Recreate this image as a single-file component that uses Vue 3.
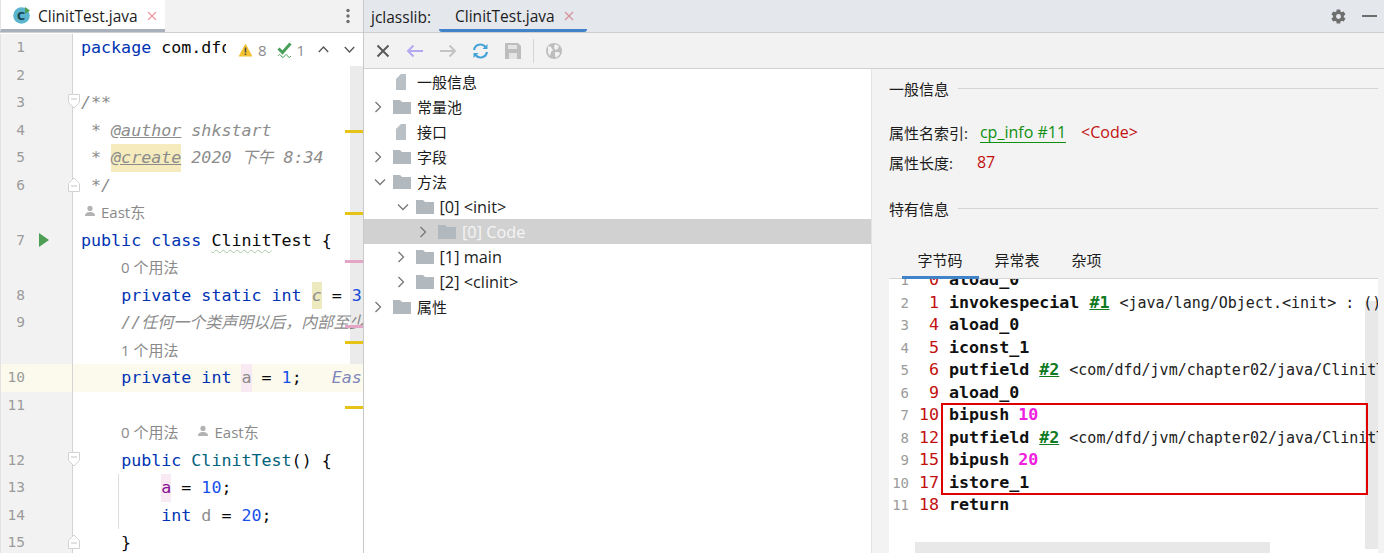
<script setup>
const editorRows = [
  { no: 1, tokens: [['kw', 'package'], ['', ' com.dfd.jvm;']] },
  { no: 2, tokens: [] },
  { no: 3, fold: 'open', tokens: [['cm', '/**']] },
  { no: 4, tokens: [['cm', ' * '], ['tag', '@author'], ['cm', ' shkstart']] },
  { no: 5, tokens: [['cm', ' * '], ['tag hl', '@create'], ['cm', ' 2020 '], ['cm cjk', '下午'], ['cm', ' 8:34']] },
  { no: 6, fold: 'close', tokens: [['cm', ' */']] },
  { hint: 'East东', person: true, left: 3 },
  { no: 7, run: true, tokens: [['kw', 'public'], ['', ' '], ['kw', 'class'], ['', ' '], ['wavy', 'Clinit'], ['', 'Test {']] },
  { hint: '0 个用法', left: 48 },
  { no: 8, tokens: [['', '    '], ['kw', 'private'], ['', ' '], ['kw', 'static'], ['', ' '], ['kw', 'int'], ['', ' '], ['stat', 'c'], ['', ' = '], ['num', '3'], ['', ';']] },
  { no: 9, tokens: [['', '    '], ['cm', '//'], ['cm cjk', '任何一个类声明以后，内部至少存在一个类的构造器']] },
  { hint: '1 个用法', left: 48 },
  { no: 10, current: true, tokens: [['', '    '], ['kw', 'private'], ['', ' '], ['kw', 'int'], ['', ' '], ['unused', 'a'], ['', ' = '], ['num', '1'], ['', ';'], ['inlay', '   East东']] },
  { no: 11, tokens: [] },
  { hint: '0 个用法', left: 48, author: 'East东' },
  { no: 12, fold: 'open', tokens: [['', '    '], ['kw', 'public'], ['', ' '], ['ctor', 'ClinitTest'], ['', '() {']] },
  { no: 13, guide: true, tokens: [['', '        '], ['field', 'a'], ['', ' = '], ['num', '10'], ['', ';']] },
  { no: 14, guide: true, tokens: [['', '        '], ['kw', 'int'], ['', ' '], ['gray', 'd'], ['', ' = '], ['num', '20'], ['', ';']] },
  { no: 15, fold: 'close', tokens: [['', '    }']] }
]

const marks = [
  { top: 130, color: '#e6c417' },
  { top: 212, color: '#e6c417' },
  { top: 260, color: '#e3a6c4' },
  { top: 325, color: '#e3a6c4' },
  { top: 341, color: '#e6c417' },
  { top: 406, color: '#e6c417' }
]

const treeRows = [
  { label: '一般信息', level: 0, icon: 'doc' },
  { label: '常量池', level: 0, arrow: 'right' },
  { label: '接口', level: 0, icon: 'doc' },
  { label: '字段', level: 0, arrow: 'right' },
  { label: '方法', level: 0, arrow: 'down' },
  { label: '[0] <init>', level: 1, arrow: 'down', latin: true },
  { label: '[0] Code', level: 2, arrow: 'right', selected: true, latin: true },
  { label: '[1] main', level: 1, arrow: 'right', latin: true },
  { label: '[2] <clinit>', level: 1, arrow: 'right', latin: true },
  { label: '属性', level: 0, arrow: 'right' }
]

const byteRows = [
  { no: 1, off: 0, op: 'aload_0' },
  { no: 2, off: 1, op: 'invokespecial', ref: '#1', rest: '<java/lang/Object.<init> : ()V>' },
  { no: 3, off: 4, op: 'aload_0' },
  { no: 4, off: 5, op: 'iconst_1' },
  { no: 5, off: 6, op: 'putfield', ref: '#2', rest: '<com/dfd/jvm/chapter02/java/ClinitTest.a : I>' },
  { no: 6, off: 9, op: 'aload_0' },
  { no: 7, off: 10, op: 'bipush', val: '10' },
  { no: 8, off: 12, op: 'putfield', ref: '#2', rest: '<com/dfd/jvm/chapter02/java/ClinitTest.a : I>' },
  { no: 9, off: 15, op: 'bipush', val: '20' },
  { no: 10, off: 17, op: 'istore_1' },
  { no: 11, off: 18, op: 'return' }
]
</script>

<template>
  <div class="app">
    <section class="left">
      <header class="left-tabs">
        <div class="file-tab">
          <svg class="class-icon" width="18" height="18" viewBox="0 0 18 18">
            <circle cx="8.5" cy="9.5" r="8.3" fill="#5cb5cf" />
            <text x="8" y="13.5" text-anchor="middle" class="class-c">C</text>
            <path d="M12 1v7l5-3.5z" fill="#4f9e55" />
          </svg>
          <span class="tab-name">ClinitTest.java</span>
          <svg class="tab-close" width="10" height="10" viewBox="0 0 10 10"><path d="M1 1l8 8M9 1l-8 8" stroke="#ee9aa8" stroke-width="1.2" fill="none" /></svg>
        </div>
        <svg class="kebab" width="6" height="16" viewBox="0 0 6 16"><circle cx="3" cy="2.5" r="1.7" fill="#6e6e6e" /><circle cx="3" cy="8" r="1.7" fill="#6e6e6e" /><circle cx="3" cy="13.5" r="1.7" fill="#6e6e6e" /></svg>
      </header>

      <div class="editor">
        <template v-for="(row, i) in editorRows" :key="i">
          <div v-if="row.hint" class="row">
            <div class="gutter"></div>
            <div class="hint" :style="{ paddingLeft: row.left + 'px' }">
              <svg v-if="row.person" class="person" width="12" height="12" viewBox="0 0 12 12"><circle cx="6" cy="3.4" r="2.6" fill="#b3b3b3" /><path d="M1 11c0-3 2-4 5-4s5 1 5 4z" fill="#b3b3b3" /></svg>
              <span>{{ row.hint }}</span>
              <template v-if="row.author">
                <svg class="person after" width="12" height="12" viewBox="0 0 12 12"><circle cx="6" cy="3.4" r="2.6" fill="#b3b3b3" /><path d="M1 11c0-3 2-4 5-4s5 1 5 4z" fill="#b3b3b3" /></svg>
                <span>{{ row.author }}</span>
              </template>
            </div>
          </div>
          <div v-else class="row" :class="{ current: row.current }">
            <div class="gutter">
              <span class="line-no">{{ row.no }}</span>
              <svg v-if="row.run" class="run" width="10" height="14" viewBox="0 0 10 14"><path d="M0 0l10 7-10 7z" fill="#4f9e55" /></svg>
              <svg v-if="row.fold === 'open'" class="fold" width="12" height="15" viewBox="0 0 12 15"><path d="M.5.5h11v8l-5.5 5.5-5.5-5.5z" fill="#fff" stroke="#d2d2d2" /><path d="M3 5h6" stroke="#c4c4c4" /></svg>
              <svg v-if="row.fold === 'close'" class="fold" width="12" height="15" viewBox="0 0 12 15"><path d="M.5 14.5h11v-8l-5.5-5.5-5.5 5.5z" fill="#fff" stroke="#d2d2d2" /><path d="M3 9h6" stroke="#c4c4c4" /></svg>
            </div>
            <div class="code">
              <span v-for="(t, j) in row.tokens" :key="j" :class="t[0]">{{ t[1] }}</span>
              <i v-if="row.guide" class="guide"></i>
            </div>
          </div>
        </template>

        <div class="scroll-track"></div>
        <i v-for="m in marks" :key="m.top" class="mark" :style="{ top: m.top - 33 + 'px', background: m.color }"></i>

        <div class="inspect">
          <svg width="15" height="14" viewBox="0 0 15 14"><path d="M7.5.5l7 13H.5z" fill="#f2c230" /><path d="M7.5 4.5v5M7.5 10.5v1.5" stroke="#4a4a4a" stroke-width="1.5" /></svg>
          <span class="count">8</span>
          <svg class="check" width="15" height="16" viewBox="0 0 15 16"><path d="M1.5 6.5l4 4 8-9" stroke="#49a05a" stroke-width="3" fill="none" /><path d="M1 14c1.5-2 2-2 3.3 0s1.8 2 3.2 0 2-2 3.2 0 1.8 2 3.3 0" stroke="#49a05a" fill="none" /></svg>
          <span class="count">1</span>
          <svg class="chev first" width="11" height="7" viewBox="0 0 11 7"><path d="M.8 6l4.7-5 4.7 5" stroke="#555" stroke-width="1.3" fill="none" /></svg>
          <svg class="chev" width="11" height="7" viewBox="0 0 11 7"><path d="M.8 1l4.7 5 4.7-5" stroke="#555" stroke-width="1.3" fill="none" /></svg>
        </div>
      </div>
    </section>

    <section class="right">
      <header class="right-tabs">
        <span class="jc-label">jclasslib:</span>
        <div class="jc-tab">
          <span class="tab-name">ClinitTest.java</span>
          <svg class="tab-close" width="10" height="10" viewBox="0 0 10 10"><path d="M1 1l8 8M9 1l-8 8" stroke="#d98f9c" stroke-width="1.2" fill="none" /></svg>
        </div>
        <div class="spacer"></div>
        <svg class="gear" width="17" height="17" viewBox="0 0 24 24"><path fill="#6e6e6e" d="M19.4 13c.1-.3.1-.7.1-1s0-.7-.1-1l2.1-1.6c.2-.2.2-.4.1-.6l-2-3.5c-.1-.2-.4-.3-.6-.2l-2.5 1c-.5-.4-1.100-.7-1.700-1l-.4-2.600c0-.3-.2-.5-.5-.5h-4c-.3 0-.5.200-.5.400l-.4 2.700c-.6.200-1.200.6-1.700 1l-2.500-1c-.2-.1-.5 0-.6.200l-2 3.500c-.1.200-.1.500.1.600L4.400 11c-.1.300-.1.700-.1 1s0 .7.100 1l-2.100 1.600c-.2.200-.2.400-.1.600l2 3.500c.1.200.4.300.6.200l2.500-1c.5.400 1.100.7 1.700 1l.4 2.600c0 .3.200.5.500.5h4c.3 0 .5-.2.500-.4l.4-2.700c.6-.2 1.200-.6 1.700-1l2.500 1c.2.100.5 0 .6-.2l2-3.500c.1-.2.100-.5-.1-.6zM12 15.500a3.500 3.500 0 1 1 0-7 3.500 3.500 0 0 1 0 7z" /></svg>
        <i class="minimize"></i>
      </header>

      <div class="toolbar">
        <svg width="14" height="14" viewBox="0 0 14 14"><path d="M1.5 1.5l11 11M12.5 1.5l-11 11" stroke="#5a5a5a" stroke-width="2" fill="none" /></svg>
        <svg class="gap first-gap" width="18" height="14" viewBox="0 0 18 14"><path d="M17 7H2M7.5 1.5L2 7l5.5 5.5" stroke="#b4a9f0" stroke-width="2" fill="none" /></svg>
        <svg class="gap" width="18" height="14" viewBox="0 0 18 14"><path d="M1 7h15M10.5 1.5L16 7l-5.5 5.5" stroke="#c4c4c4" stroke-width="2" fill="none" /></svg>
        <svg class="gap" width="17" height="16" viewBox="0 0 17 16"><path d="M2 7a6.500 6.500 0 0 1 11.500-3M15 9a6.500 6.500 0 0 1-11.500 3" stroke="#45a3d8" stroke-width="2.2" fill="none" /><path d="M15.500 1v5h-5zM1.500 15v-5h5z" fill="#45a3d8" /></svg>
        <svg class="gap save" width="16" height="16" viewBox="0 0 16 16"><path d="M0 0h13l3 3v13H0z" fill="#bdbdbd" /><path d="M3 2h9v4H3zM4 10h8v6H4z" fill="#e4e4e4" /></svg>
        <i class="sep"></i>
        <svg width="18" height="18" viewBox="0 0 18 18"><circle cx="9" cy="9" r="8" fill="#bdbdbd" /><path d="M3 4l3 1 2 3-2 2-1 4-2-3zM10 2l4 2-1 3-3 1-1-3zM10 10l4 0 1 2-4 4-1-3z" fill="#f2f2f2" /></svg>
      </div>

      <div class="panes">
        <div class="tree">
          <div v-for="r in treeRows" :key="r.label" class="tree-row" :class="{ selected: r.selected }" :style="{ paddingLeft: 7 + r.level * 22.5 + 'px' }">
            <span class="arrow">
              <svg v-if="r.arrow === 'right'" width="8" height="12" viewBox="0 0 8 12"><path d="M1.5 1l5 5-5 5" stroke="#777" stroke-width="1.3" fill="none" /></svg>
              <svg v-if="r.arrow === 'down'" width="12" height="8" viewBox="0 0 12 8"><path d="M1 1.5l5 5 5-5" stroke="#777" stroke-width="1.3" fill="none" /></svg>
            </span>
            <span class="node-icon">
              <svg v-if="r.icon === 'doc'" width="18" height="16" viewBox="0 0 18 16"><path d="M3 5l5-5h5v16H3z" fill="#b9c0c6" /></svg>
              <svg v-else width="18" height="15" viewBox="0 0 18 15"><path d="M0 1h7l2 2h9v12H0z" fill="#b1b8be" /></svg>
            </span>
            <span class="node-label" :class="{ latin: r.latin }">{{ r.label }}</span>
          </div>
        </div>

        <div class="detail">
          <div class="section-title"><span>一般信息</span><i></i></div>
          <div class="attr first-attr">
            <span class="attr-label">属性名索引:</span>
            <span class="link">cp_info #11</span>
            <span class="red code-name">&lt;Code&gt;</span>
          </div>
          <div class="attr second-attr">
            <span class="attr-label">属性长度:</span>
            <span class="red len">87</span>
          </div>
          <div class="section-title unique"><span>特有信息</span><i></i></div>

          <nav class="detail-tabs">
            <span class="d-tab active">字节码</span>
            <span class="d-tab">异常表</span>
            <span class="d-tab">杂项</span>
          </nav>

          <div class="byte-box">
            <div class="byte-rows">
              <div v-for="b in byteRows" :key="b.no" class="byte-row">
                <span class="b-no">{{ b.no }}</span>
                <span class="b-off">{{ b.off }}</span>
                <span class="b-op">{{ b.op }}</span>
                <template v-if="b.ref"> <span class="b-ref">{{ b.ref }}</span> <span class="b-rest">{{ b.rest }}</span></template>
                <template v-if="b.val"> <span class="b-val">{{ b.val }}</span></template>
              </div>
            </div>
            <div class="v-scroll"></div>
            <div class="h-scroll"></div>
            <div class="red-box"></div>
          </div>
        </div>
      </div>
    </section>
  </div>
</template>

<style>
html, body { margin: 0; padding: 0; background: #fff; overflow: hidden; }
</style>

<style scoped>
.app {
  width: 1384px;
  height: 553px;
  display: flex;
  overflow: hidden;
  font-family: "Open Sans", "Noto Sans CJK SC", sans-serif;
  color: #1c1c1c;
}
.left {
  width: 363px;
  flex: none;
  border-right: 1px solid #c9c9c9;
  display: flex;
  flex-direction: column;
}
.left-tabs {
  height: 32px;
  flex: none;
  background: #f2f2f2;
  border-bottom: 1px solid #d0d0d0;
  display: flex;
  align-items: center;
  justify-content: space-between;
  padding-right: 12px;
}
.file-tab {
  width: 165px;
  height: 32px;
  box-sizing: border-box;
  background: #fff;
  border-bottom: 3px solid #a9b0bb;
  border-left: 1px solid #e4e4e4;
  display: flex;
  align-items: center;
  padding: 2px 0 0 12px;
}
.class-icon { margin: -2px 7px 0 0; flex: none; }
.class-c { font: 700 11px "DejaVu Sans", sans-serif; fill: #16414f; }
.tab-name { font-size: 15.5px; color: #1c1c1c; white-space: nowrap; }
.tab-close { margin-left: 9px; flex: none; }
.editor {
  position: relative;
  flex: 1;
  overflow: hidden;
  background: #fff;
  padding-top: 1px;
}
.row {
  height: 27.5px;
  display: flex;
}
.row.current { background: #fcfaed; }
.gutter {
  position: relative;
  width: 73px;
  flex: none;
  box-sizing: border-box;
  background: #f2f2f2;
  border-left: 1px solid #e2e2e2;
  border-right: 1px solid #d3d3d3;
}
.row.current .gutter { background: #fcfaed; }
.line-no {
  position: absolute;
  right: 47px;
  top: 0;
  font: 14.5px/27.5px "DejaVu Sans Mono", monospace;
  color: #9b9b9b;
}
.run { position: absolute; left: 38px; top: 6px; }
.fold { position: absolute; left: 67px; top: 5px; }
.code {
  position: relative;
  flex: 1;
  min-width: 0;
  padding-left: 8px;
  font: 16.67px/27.5px "DejaVu Sans Mono", "Noto Sans CJK SC", monospace;
  white-space: pre;
  overflow: hidden;
  color: #080808;
}
.kw { color: #0033b3; }
.cm { color: #8c8c8c; font-style: italic; }
.cjk { font-size: 16px; }
.tag { color: #8c8c8c; font-style: italic; text-decoration: underline; }
.hl { background: #f5ebbd; display: inline-block; }
.wavy { text-decoration: underline wavy #a4c9a4 1px; text-underline-offset: 3px; }
.stat { color: #8c8c8c; font-style: italic; background: #eeeac0; display: inline-block; }
.unused { color: #8c8c8c; background: #f9e9f2; display: inline-block; }
.field { color: #871094; background: #f9e9f2; display: inline-block; }
.num { color: #1750eb; }
.ctor { color: #00627a; }
.gray { color: #8c8c8c; }
.inlay { color: #7f86bb; font-style: italic; }
.guide {
  position: absolute;
  left: 45px;
  top: 0;
  bottom: 0;
  width: 1px;
  background: #dedede;
}
.hint {
  display: flex;
  align-items: center;
  padding-bottom: 2px;
  box-sizing: border-box;
  font-size: 15px;
  color: #8a8a8a;
  white-space: nowrap;
}
.hint .person { margin: 0 5px 2px 8px; }
.hint .person.after { margin-left: 19px; }
.scroll-track {
  position: absolute;
  right: 0;
  top: 33px;
  width: 13px;
  height: 298px;
  background: rgba(0, 0, 0, 0.08);
}
.mark {
  position: absolute;
  right: 0;
  width: 18px;
  height: 2.5px;
}
.inspect {
  position: absolute;
  left: 226px;
  right: 0;
  top: 0;
  height: 33px;
  background: #fff;
  display: flex;
  align-items: center;
  padding-left: 12px;
  font-size: 15px;
  color: #8a8a8a;
}
.count { margin-left: 5px; }
.check { margin-left: 10px; }
.chev.first { margin: 0 15px 0 13px; }
.right {
  flex: 1;
  min-width: 0;
  display: flex;
  flex-direction: column;
}
.right-tabs {
  height: 32px;
  flex: none;
  background: #e4e7ec;
  border-bottom: 1px solid #cfcfcf;
  display: flex;
  align-items: center;
  padding-left: 7px;
}
.jc-label { font-size: 15.5px; color: #1c1c1c; padding-top: 2px; }
.jc-tab {
  height: 32px;
  box-sizing: border-box;
  width: 148px;
  margin-left: 8px;
  padding: 2px 0 0 16px;
  display: flex;
  align-items: center;
  border-bottom: 3px solid #4083c9;
  border-radius: 0 0 3px 3px;
}
.spacer { flex: 1; }
.gear { margin-right: 15px; }
.minimize { width: 15px; height: 2px; background: #6e6e6e; margin-right: 7px; }
.toolbar {
  height: 35px;
  flex: none;
  background: #f2f2f2;
  border-bottom: 1px solid #d0d0d0;
  display: flex;
  align-items: center;
  padding-left: 12px;
}
.toolbar .gap { margin-left: 15px; }
.toolbar .first-gap { margin-left: 16px; }
.toolbar .save { margin-left: 16px; }
.sep { width: 1px; height: 24px; background: #d5d5d5; margin: 0 11px 0 12px; }
.panes {
  flex: 1;
  min-height: 0;
  display: flex;
}
.tree {
  width: 507px;
  flex: none;
  background: #fff;
  box-sizing: border-box;
}
.tree-row {
  height: 25px;
  display: flex;
  align-items: center;
  box-sizing: border-box;
  font-size: 15px;
  color: #1c1c1c;
}
.tree-row.selected { background: #d1d1d1; color: #f5f5f5; }
.arrow {
  width: 22px;
  flex: none;
  display: flex;
  align-items: center;
  padding-left: 3px;
  box-sizing: border-box;
}
.node-icon { width: 24px; flex: none; display: flex; align-items: center; }
.node-label { white-space: nowrap; }
.node-label.latin { font-size: 16.3px; padding-top: 1px; }
.detail {
  flex: 1;
  min-width: 0;
  background: #f3f3f3;
  border-left: 1px solid #e4e4e4;
  padding: 7px 6px 0 17px;
  display: flex;
  flex-direction: column;
  font-size: 15px;
}
.section-title {
  height: 24px;
  display: flex;
  align-items: center;
  gap: 9px;
}
.section-title i { flex: 1; height: 1px; background: #d5d5d5; }
.attr { display: flex; align-items: center; white-space: nowrap; }
.first-attr { margin-top: 17px; height: 30px; }
.second-attr { height: 30px; }
.attr-label { color: #1c1c1c; }
.link {
  margin-left: 12px;
  font-size: 16px;
  color: #109010;
  border-bottom: 1px solid #109010;
  line-height: 20px;
}
.red { color: #c21010; font-size: 16px; }
.code-name { margin-left: 15px; }
.len { margin-left: 24px; }
.unique { margin-top: 19px; }
.detail-tabs {
  height: 59px;
  box-sizing: border-box;
  border-bottom: 1px solid #d5d5d5;
  display: flex;
  align-items: flex-end;
  padding-left: 12.5px;
}
.d-tab {
  height: 33px;
  box-sizing: border-box;
  padding: 0 16px;
  line-height: 31px;
}
.d-tab.active { border-bottom: 3px solid #4083c9; margin-bottom: -1px; height: 34px; }
.byte-box {
  position: relative;
  flex: 1;
  min-height: 0;
  background: #fff;
  overflow: hidden;
}
.byte-rows { margin-top: -9.7px; }
.byte-row {
  height: 22.5px;
  display: flex;
  align-items: center;
  font: 16.67px/22.5px "DejaVu Sans Mono", monospace;
  white-space: pre;
}
.b-no {
  width: 20px;
  flex: none;
  text-align: right;
  font-size: 14px;
  color: #9b9b9b;
}
.b-off {
  width: 30px;
  flex: none;
  text-align: right;
  color: #c21010;
}
.b-op { margin-left: 10px; font-weight: 700; color: #111; }
.b-ref { margin-left: 10px; font-weight: 700; color: #0f7a1f; text-decoration: underline; }
.b-rest { margin-left: 10px; font-size: 15px; color: #222; }
.b-val { margin-left: 9px; color: #f020e0; font-weight: 700; }
.v-scroll {
  position: absolute;
  right: 0;
  top: 22px;
  bottom: 4px;
  width: 13px;
  background: rgba(0, 0, 0, 0.09);
}
.h-scroll {
  position: absolute;
  left: 26px;
  bottom: 0;
  width: 355px;
  height: 11px;
  background: #e8e8e8;
}
.red-box {
  position: absolute;
  left: 52px;
  top: 124px;
  width: 423px;
  height: 88px;
  border: 2px solid #e00000;
}
</style>
